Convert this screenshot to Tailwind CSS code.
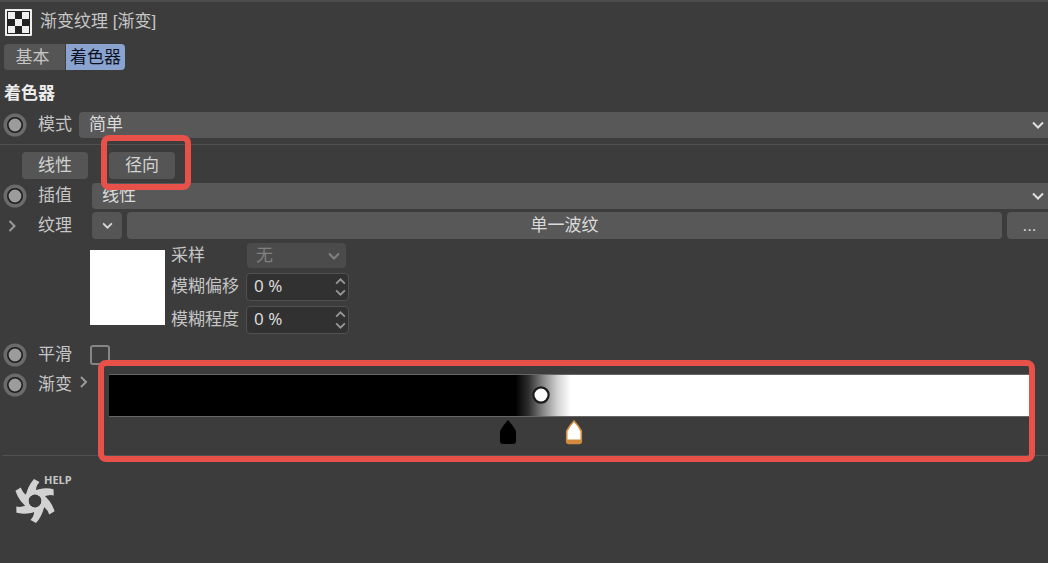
<!DOCTYPE html>
<html lang="zh-CN">
<head>
<meta charset="utf-8">
<meta name="viewport" content="width=device-width, initial-scale=1">
<title>渐变纹理</title>
<script src="https://cdn.jsdelivr.net/npm/@tailwindcss/browser@4"></script>
</head>
<body class="min-h-screen overflow-x-hidden border-t-2 border-[#4c4c4c] bg-[#3c3c3c] font-['Liberation_Sans','Noto_Sans_CJK_SC',sans-serif] text-[17px] leading-6 text-[#c6c6c6]">
<svg class="hidden" aria-hidden="true">
  <symbol id="dot" viewBox="0 0 24 24"><circle cx="12" cy="12" r="11.5" fill="#6b6b6b"/><circle cx="12" cy="12" r="7.2" fill="#9c9c9c" stroke="#1d1d1d" stroke-width="1.6"/></symbol>
  <symbol id="down" viewBox="0 0 12 8"><path d="M1 1.5 6 6.5 11 1.5" fill="none" stroke="currentColor" stroke-width="2"/></symbol>
  <symbol id="up" viewBox="0 0 12 8"><path d="M1 6.5 6 1.5 11 6.5" fill="none" stroke="currentColor" stroke-width="2"/></symbol>
  <symbol id="right" viewBox="0 0 8 12"><path d="M1.5 1 6.5 6 1.5 11" fill="none" stroke="currentColor" stroke-width="2"/></symbol>
</svg>

<header class="flex h-[42px] items-center gap-2 pb-[2px] pl-[5px]">
  <svg class="size-[27px]" viewBox="0 0 27 27" aria-hidden="true">
    <rect width="27" height="27" rx="1" fill="#efefef"/><rect x="2" y="2" width="23" height="23" fill="#222"/>
    <path fill="#efefef" d="M3 3h7v7H3zM17 3h7v7h-7zM10 10h7v7h-7zM3 17h7v7H3zM17 17h7v7h-7z"/>
  </svg>
  <h1>渐变纹理 [渐变]</h1>
</header>

<nav class="flex h-[26px] gap-px pl-1">
  <button class="w-[61px] rounded-l-sm bg-[#555] pt-px pr-1">基本</button>
  <button class="w-[59px] rounded-r-sm bg-[#8aa3cf] pt-px text-[#0c1122]">着色器</button>
</nav>

<main>
  <h2 class="flex h-[42px] items-center pt-[6px] pl-1 font-bold text-[#ededed]">着色器</h2>

  <div class="flex h-[26px] items-center">
    <button class="ml-[3px] w-[35px]" aria-label="模式关键帧"><svg class="size-6"><use href="#dot"/></svg></button>
    <label for="mode" class="w-[41px]">模式</label>
    <div class="relative flex-1">
      <select id="mode" class="block h-[26px] w-full appearance-none rounded-l-sm bg-[#585858] pl-[10px] text-[#dadada]"><option>简单</option></select>
      <svg class="pointer-events-none absolute top-[9px] right-1 h-2 w-3 text-[#e0e0e0]"><use href="#down"/></svg>
    </div>
  </div>
  <hr class="mt-[6px] border-[#505050]">

  <div class="flex gap-[21px] pt-[7px] pb-[4px] pl-[22px]">
    <button class="h-[27px] w-[66px] rounded-sm bg-[#555] text-[#d2d2d2]">线性</button>
    <div class="relative">
      <button class="h-[27px] w-[66px] rounded-sm bg-[#555] text-[#d2d2d2]">径向</button>
      <div class="pointer-events-none absolute -top-[17px] -left-[8px] z-10 h-[55px] w-[90px] rounded-lg border-6 border-[#e8504a]"></div>
    </div>
  </div>

  <div class="flex h-[26px] items-center">
    <button class="ml-[3px] w-[35px]" aria-label="插值关键帧"><svg class="size-6"><use href="#dot"/></svg></button>
    <label for="interp" class="w-[54px]">插值</label>
    <div class="relative flex-1">
      <select id="interp" class="block h-[26px] w-full appearance-none rounded-l-sm bg-[#585858] pl-[10px] text-[#dadada]"><option>线性</option></select>
      <svg class="pointer-events-none absolute top-[9px] right-1 h-2 w-3 text-[#e0e0e0]"><use href="#down"/></svg>
    </div>
  </div>

  <div class="mt-[3px] flex h-[27px] items-center">
    <button class="w-[38px] pl-2" aria-label="展开纹理"><svg class="h-3 w-2 text-[#9a9a9a]"><use href="#right"/></svg></button>
    <span class="w-[54px]">纹理</span>
    <button class="grid h-full w-[30px] place-items-center rounded-sm bg-[#555]" aria-label="选择纹理"><svg class="h-[7px] w-[11px] text-[#dadada]"><use href="#down"/></svg></button>
    <button class="ml-[5px] h-full flex-1 rounded-sm bg-[#585858] text-[#dadada]">单一波纹</button>
    <button class="ml-[5px] h-full w-[41px] rounded-l-sm bg-[#585858] pl-1 text-[#dadada]">...</button>
  </div>

  <div class="mt-1 flex gap-[6px] pl-[90px]">
    <div class="mt-[7px] size-[75px] bg-white"></div>
    <div class="grid grid-cols-[75px_103px] gap-y-[5px]">
      <label for="sample" class="pt-px">采样</label>
      <div class="relative ml-px w-[99px] text-[#818181]">
        <select id="sample" disabled class="block h-[25px] w-full appearance-none rounded-sm bg-[#4b4b4b] pl-[9px]"><option>无</option></select>
        <svg class="pointer-events-none absolute top-[9px] right-[6px] h-2 w-3"><use href="#down"/></svg>
      </div>
      <label for="offset" class="pt-[2px]">模糊偏移</label>
      <div class="relative text-[#999]">
        <input id="offset" value="0 %" class="block h-7 w-full rounded-sm border border-[#505050] bg-[#313131] pb-1 pl-[7px] font-['Noto_Sans',sans-serif] text-[#dadada]">
        <svg class="pointer-events-none absolute top-[5px] right-[3px] h-[7px] w-[11px]"><use href="#up"/></svg>
        <svg class="pointer-events-none absolute right-[3px] bottom-[5px] h-[7px] w-[11px]"><use href="#down"/></svg>
      </div>
      <label for="blur" class="pt-[2px]">模糊程度</label>
      <div class="relative text-[#999]">
        <input id="blur" value="0 %" class="block h-7 w-full rounded-sm border border-[#505050] bg-[#313131] pb-1 pl-[7px] font-['Noto_Sans',sans-serif] text-[#dadada]">
        <svg class="pointer-events-none absolute top-[5px] right-[3px] h-[7px] w-[11px]"><use href="#up"/></svg>
        <svg class="pointer-events-none absolute right-[3px] bottom-[5px] h-[7px] w-[11px]"><use href="#down"/></svg>
      </div>
    </div>
  </div>

  <div class="mt-2 flex h-[26px] items-center">
    <button class="ml-[3px] w-[35px]" aria-label="平滑关键帧"><svg class="size-6"><use href="#dot"/></svg></button>
    <label for="smooth" class="w-[52px]">平滑</label>
    <input id="smooth" type="checkbox" class="size-5 appearance-none rounded-[3px] border-2 border-[#858585]">
  </div>

  <section class="relative flex h-[87px] items-start pt-[2px]">
    <button class="mt-[3px] ml-[3px] w-[35px]" aria-label="渐变关键帧"><svg class="size-6"><use href="#dot"/></svg></button>
    <span class="mt-[3px] w-[41px]">渐变</span>
    <button class="mt-[6px] w-[30px]" aria-label="展开渐变"><svg class="block h-3 w-[9px] text-[#9a9a9a]"><use href="#right"/></svg></button>
    <div class="mt-1 mr-[19px] flex-1">
      <div class="relative h-[43px] border-y border-[#666] bg-[linear-gradient(90deg,#000_44.2%,#2e2e2e_45.6%,#888_47.2%,#d4d4d4_48.8%,#fff_50.2%)]">
        <svg class="absolute top-[10px] left-[47%] size-5 -translate-x-1/2" viewBox="0 0 20 20"><circle cx="10" cy="10" r="7.6" fill="#fff" stroke="#1c1c1c" stroke-width="2.2"/></svg>
      </div>
      <div class="relative h-7">
        <svg class="absolute top-[2px] left-[43.4%] h-[26px] w-5 -translate-x-1/2" viewBox="0 0 20 26"><path d="M10 1Q14 5 18 12V22Q18 25 15 25H5Q2 25 2 22V12Q6 5 10 1Z" fill="#000"/></svg>
        <svg class="absolute top-[2px] left-[50.5%] h-[26px] w-5 -translate-x-1/2" viewBox="0 0 20 26"><path d="M10 2Q14 6 17.3 12V22Q17.3 24.4 15 24.4H5Q2.7 24.4 2.7 22V12Q6 6 10 2Z" fill="#fff" stroke="#d38a3c" stroke-width="1.6"/><path d="M3 20.5H17V22Q17 24 15 24H5Q3 24 3 22Z" fill="#d38a3c"/></svg>
      </div>
    </div>
    <div class="pointer-events-none absolute -top-[8px] right-[13px] left-[98px] z-10 h-[102px] rounded-lg border-6 border-[#e8504a]"></div>
  </section>
  <hr class="ml-[2px] border-[#505050]">

  <a href="#help" class="mt-[15px] ml-[14px] block w-16" aria-label="帮助">
    <svg class="block h-14 w-16" viewBox="0 0 64 56">
      <g fill="#d2d2d2" transform="translate(21 30)">
        <path id="blade" d="M-10-1Q-8.500-14-1-22L4.500-19Q0-14 1-8Z"/>
        <use href="#blade" transform="rotate(60)"/><use href="#blade" transform="rotate(120)"/><use href="#blade" transform="rotate(180)"/><use href="#blade" transform="rotate(240)"/><use href="#blade" transform="rotate(300)"/>
        <circle r="8.600" fill="none" stroke="#d2d2d2" stroke-width="4.400"/>
        <circle r="6.200" fill="#3c3c3c"/>
      </g>
      <text x="30" y="13" font-family="Open Sans, sans-serif" font-size="11" font-weight="700" fill="#c6c6c6">HELP</text>
    </svg>
  </a>
</main>
</body>
</html>
